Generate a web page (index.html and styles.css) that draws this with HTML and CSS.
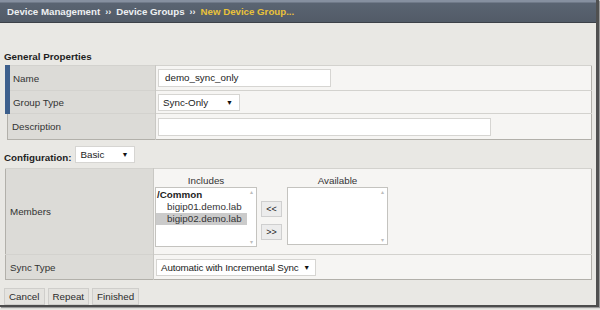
FILE: index.html
```html
<!DOCTYPE html>
<html>
<head>
<meta charset="utf-8">
<link rel="stylesheet" href="styles.css">
</head>
<body>
<div class="frame">
  <div class="header">
    <span>Device Management</span><span class="sep">››</span><span>Device Groups</span><span class="sep">››</span><span class="current">New Device Group...</span>
  </div>
  <div class="content">
    <div class="section-title">General Properties</div>
    <table class="props">
      <tr class="r-name">
        <td class="label req">Name</td>
        <td class="value"><div class="input w-name">demo_sync_only</div></td>
      </tr>
      <tr class="r-type">
        <td class="label req">Group Type</td>
        <td class="value"><div class="select w-type"><span>Sync-Only</span><span class="arrow">▼</span></div></td>
      </tr>
      <tr class="r-desc">
        <td class="label">Description</td>
        <td class="value"><div class="input w-desc"></div></td>
      </tr>
    </table>
    <div class="config">
      <span class="config-label">Configuration:</span>
      <div class="select w-basic"><span>Basic</span><span class="arrow">▼</span></div>
    </div>
    <table class="props props2">
      <tr class="r-members">
        <td class="label">Members</td>
        <td class="value">
          <div class="members">
            <div class="listcol">
              <div class="listlabel">Includes</div>
              <div class="listbox inc">
                <div class="items">
                  <div class="grp">/Common</div>
                  <div class="item">bigip01.demo.lab</div>
                  <div class="item sel">bigip02.demo.lab</div>
                </div>
                <div class="sbar"><span>▴</span><span>▾</span></div>
              </div>
            </div>
            <div class="movebtns">
              <div class="mbtn">&lt;&lt;</div>
              <div class="mbtn">&gt;&gt;</div>
            </div>
            <div class="listcol">
              <div class="listlabel">Available</div>
              <div class="listbox avail">
                <div class="items"></div>
                <div class="sbar"><span>▴</span><span>▾</span></div>
              </div>
            </div>
          </div>
        </td>
      </tr>
      <tr class="r-sync">
        <td class="label">Sync Type</td>
        <td class="value"><div class="select w-sync"><span>Automatic with Incremental Sync</span><span class="arrow">▼</span></div></td>
      </tr>
    </table>
    <div class="actions">
      <div class="btn">Cancel</div>
      <div class="btn">Repeat</div>
      <div class="btn">Finished</div>
    </div>
  </div>
</div>
</body>
</html>
```
FILE: styles.css
```css
* { box-sizing: border-box; }
html, body { margin: 0; padding: 0; background: #e9e8e4; }
body {
  font-family: "Liberation Sans", Arial, sans-serif;
  font-size: 9.8px;
  color: #333;
  width: 600px;
  height: 310px;
  overflow: hidden;
}
.frame {
  width: 599px;
  height: 307px;
  background: #e9e8e4;
  border-right: 3px solid #505050;
  border-bottom: 2px solid #4c4c4c;
  overflow: hidden;
  box-shadow: 1px 1px 1px #9a9a9a;
}
.header {
  height: 23px;
  background: linear-gradient(#8690a0 0, #8690a0 2px, #5a6472 3px, #525b67 100%);
  border-bottom: 1px solid #3c4148;
  color: #eef0f2;
  font-weight: bold;
  font-size: 9.7px;
  line-height: 24px;
  padding-left: 7px;
  white-space: nowrap;
}
.header .sep { margin: 0 5px; font-weight: bold; font-size: 9px; }
.header .current { color: #e9c23a; }
.content { padding: 0 0 0 4px; }
.section-title {
  font-weight: bold;
  margin-top: 27px;
  height: 15px;
  line-height: 14px;
  color: #1e1e1e;
}
table.props {
  border-collapse: collapse;
  width: 587px;
  margin-left: 1px;
  border: 1px solid #b2b0aa;
}
table.props td { padding: 0; border-top: 1px solid #d3d2ce; }
td.label {
  width: 148px;
  background: #dcdbd7;
  border-right: 1px solid #c9c8c4;
  padding-left: 4px !important;
  color: #333;
  vertical-align: middle;
}
td.label.req {
  border-left: 5px solid #3d5f8c;
  padding-left: 3px !important;
}
td.value { background: #f6f5f3; padding-left: 2px !important; vertical-align: middle; }
.r-name { height: 25px; }
.r-type { height: 23px; }
.r-desc { height: 26px; }
.input {
  height: 18px;
  background: #fff;
  border: 1px solid #d6d5d2;
  padding-left: 6px;
  line-height: 16px;
  color: #222;
}
.w-name { width: 173px; }
.w-desc { width: 333px; }
.select {
  display: flex;
  justify-content: space-between;
  align-items: center;
  height: 17px;
  background: #fff;
  border: 1px solid #d6d5d2;
  padding: 0 6px 0 4px;
  color: #222;
  white-space: nowrap;
}
.select .arrow { font-size: 7px; color: #111; }
.w-type { width: 82px; }
.w-basic { width: 60px; }
.w-sync { width: 160px; padding: 0 5px 0 4px; letter-spacing: -0.15px; }
.config {
  display: flex;
  align-items: center;
  height: 16px;
  margin-top: 8px;
  margin-bottom: 4px;
  gap: 4px;
}
.config .select { margin-top: -4px; }
.config-label { font-weight: bold; color: #1e1e1e; margin-top: 3px; }
.r-members { height: 86px; }
.r-sync { height: 25px; }
.r-members td.value { vertical-align: top; padding-left: 1px !important; }
.members { display: flex; align-items: flex-start; }
.listcol { display: flex; flex-direction: column; }
.listlabel { text-align: center; height: 18px; line-height: 24px; color: #333; }
.listbox {
  display: flex;
  background: #fff;
  border: 1px solid #c4c3bf;
  height: 60px;
}
.listbox.inc { width: 102px; }
.listbox.avail { width: 101px; height: 58px; }
.items { flex: 1; padding-top: 1px; }
.grp { font-weight: bold; padding-left: 1px; line-height: 12px; color: #1e1e1e; }
.item { padding-left: 11px; line-height: 12px; color: #333; }
.item.sel { background: #cbcbcb; }
.sbar {
  width: 9px;
  display: flex;
  flex-direction: column;
  justify-content: space-between;
  align-items: center;
  font-size: 6px;
  color: #bdbdbd;
  line-height: 8px;
}
.movebtns {
  display: flex;
  flex-direction: column;
  gap: 7px;
  margin: 32px 5px 0 4px;
}
.mbtn {
  width: 21px;
  height: 16px;
  background: #ececec;
  border: 1px solid #cfcfcf;
  font-size: 9px;
  text-align: center;
  line-height: 14px;
  color: #222;
}
.actions { display: flex; gap: 3px; margin-top: 8px; }
.btn {
  height: 17px;
  padding: 0 4px;
  background: #e4e3df;
  border: 1px solid #cfcecb;
  line-height: 15px;
  color: #2b2b2b;
}
```
